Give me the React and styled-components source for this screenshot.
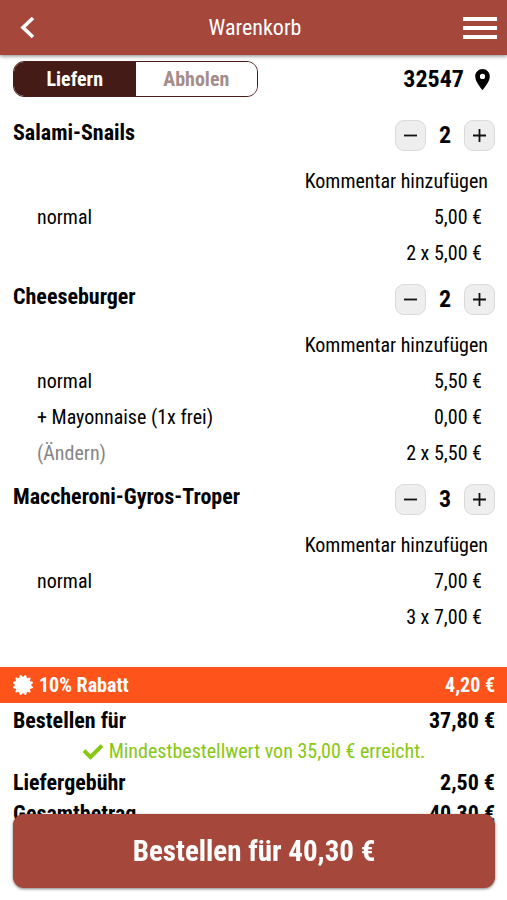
import { useState } from "react";
import styled, { createGlobalStyle } from "styled-components";
import { FaCertificate, FaCheck } from "react-icons/fa";
import { MdLocationOn } from "react-icons/md";

const GlobalStyle = createGlobalStyle`
  *,
  *::before,
  *::after {
    box-sizing: border-box;
  }
  body {
    margin: 0;
    background: #fff;
    color: #000;
    font-family: "Roboto Condensed", "Liberation Sans Narrow", Roboto, sans-serif;
    font-size: 20px;
    line-height: 36px;
  }
  button {
    padding: 0;
    border: 0;
    background: none;
    color: inherit;
    font: inherit;
    cursor: pointer;
  }
  h1,
  h2,
  dl,
  dd {
    margin: 0;
  }
`;

const Page = styled.div`
  min-height: 100vh;
  padding-bottom: 86px;
`;

const Header = styled.header`
  display: grid;
  grid-template-columns: 1fr auto 1fr;
  align-items: center;
  height: 55px;
  padding: 0 10px 0 13px;
  background: #a5483b;
  color: #fff;
  box-shadow: 0 1px 4px rgba(0, 0, 0, 0.5);
  & button {
    display: flex;
  }
  & button:last-child {
    justify-self: end;
  }
`;

const Title = styled.h1`
  font-size: 22px;
  font-weight: 400;
`;

const TopBar = styled.div`
  display: flex;
  align-items: center;
  justify-content: space-between;
  padding: 6px 12px 0 13px;
`;

const Toggle = styled.div`
  display: flex;
  flex: 0 1 245px;
  height: 36px;
  border: 1px solid #4a1c17;
  border-radius: 11px;
  overflow: hidden;
`;

const ToggleButton = styled.button`
  && {
    flex: 1;
    background: ${({ $active }) => ($active ? "#441b17" : "#fff")};
    color: ${({ $active }) => ($active ? "#fff" : "#a38c89")};
    font-weight: 700;
    line-height: 34px;
  }
`;

const Location = styled.button`
  && {
    display: flex;
    align-items: center;
    gap: 6px;
    font-size: 24px;
    font-weight: 700;
  }
`;

const Items = styled.main`
  padding: 10px 12px 32px 13px;
`;

const ItemHead = styled.div`
  display: flex;
  align-items: center;
  justify-content: space-between;
  height: 56px;
`;

const ItemName = styled.h2`
  padding-bottom: 4px;
  font-size: 22px;
  font-weight: 700;
`;

const Stepper = styled.div`
  display: flex;
  align-items: center;
`;

const StepButton = styled.button`
  && {
    display: flex;
    align-items: center;
    justify-content: center;
    width: 31px;
    height: 31px;
    border: 1px solid #dadada;
    border-radius: 9px;
    background: #eee;
  }
`;

const Amount = styled.output`
  width: 38px;
  font-size: 24px;
  font-weight: 700;
  text-align: center;
`;

const CommentButton = styled.button`
  && {
    display: block;
    margin-left: auto;
    padding-right: 7px;
  }
`;

const Line = styled.div`
  display: flex;
  justify-content: space-between;
  padding: 0 13px 0 24px;
  & > :last-child {
    margin-left: auto;
  }
`;

const EditButton = styled.button`
  && {
    color: #858585;
  }
`;

const Discount = styled.div`
  display: flex;
  align-items: center;
  justify-content: space-between;
  padding: 0 12px 0 13px;
  background: #ff531c;
  color: #fff;
  font-weight: 700;
  & span {
    display: flex;
    align-items: center;
    gap: 6px;
  }
`;

const Totals = styled.dl`
  padding: 2px 12px 0 13px;
  line-height: 31px;
`;

const TotalRow = styled.div`
  display: flex;
  justify-content: space-between;
  font-size: 22px;
  font-weight: 700;
`;

const MinimumNote = styled.div`
  display: flex;
  align-items: center;
  justify-content: center;
  gap: 6px;
  color: #87c812;
`;

const Footer = styled.footer`
  position: fixed;
  right: 0;
  bottom: 12px;
  left: 0;
  padding: 0 12px 0 13px;
`;

const OrderButton = styled.button`
  && {
    width: 100%;
    height: 74px;
    border-radius: 11px;
    background: #a5483b;
    box-shadow: 0 1px 3px rgba(0, 0, 0, 0.5);
    color: #fff;
    font-size: 29px;
    font-weight: 700;
  }
`;

const BackIcon = () => (
  <svg width="30" height="30" viewBox="0 0 30 30" fill="none" aria-hidden="true">
    <path d="M20 5 L10 14.5 L20 24" stroke="currentColor" strokeWidth="3.6" />
  </svg>
);

const MenuIcon = () => (
  <svg width="34" height="24" viewBox="0 0 34 24" aria-hidden="true">
    <path d="M0 1h34v4H0zM0 10h34v4H0zM0 19h34v4H0z" fill="currentColor" />
  </svg>
);

const StepIcon = ({ plus }) => (
  <svg width="15" height="15" viewBox="0 0 15 15" aria-hidden="true">
    <path
      d={plus ? "M1 7.5h13M7.5 1v13" : "M1 7.5h13"}
      stroke="#111"
      strokeWidth="1.8"
    />
  </svg>
);

const euro = (value) => `${value.toFixed(2).replace(".", ",")} €`;

const initialItems = [
  { name: "Salami-Snails", amount: 2, price: 5, extras: [] },
  {
    name: "Cheeseburger",
    amount: 2,
    price: 5.5,
    extras: [{ label: "+ Mayonnaise (1x frei)", price: 0 }],
  },
  { name: "Maccheroni-Gyros-Troper", amount: 3, price: 7, extras: [] },
];

const deliveryFee = 2.5;

const CartItem = ({ item, onChange }) => (
  <section>
    <ItemHead>
      <ItemName>{item.name}</ItemName>
      <Stepper>
        <StepButton
          aria-label={`${item.name} weniger`}
          onClick={() => onChange(Math.max(0, item.amount - 1))}
        >
          <StepIcon />
        </StepButton>
        <Amount>{item.amount}</Amount>
        <StepButton
          aria-label={`${item.name} mehr`}
          onClick={() => onChange(item.amount + 1)}
        >
          <StepIcon plus />
        </StepButton>
      </Stepper>
    </ItemHead>
    <CommentButton>Kommentar hinzufügen</CommentButton>
    <Line>
      <span>normal</span>
      <span>{euro(item.price)}</span>
    </Line>
    {item.extras.map((extra) => (
      <Line key={extra.label}>
        <span>{extra.label}</span>
        <span>{euro(extra.price)}</span>
      </Line>
    ))}
    <Line>
      {item.extras.length > 0 && <EditButton>(Ändern)</EditButton>}
      <span>{`${item.amount} x ${euro(item.price)}`}</span>
    </Line>
  </section>
);

const App = () => {
  const [items, setItems] = useState(initialItems);
  const [delivery, setDelivery] = useState(true);

  const sum = items.reduce((acc, item) => acc + item.amount * item.price, 0);
  const discount = sum * 0.1;
  const subtotal = sum - discount;
  const total = subtotal + deliveryFee;

  const changeAmount = (index, amount) =>
    setItems(items.map((item, i) => (i === index ? { ...item, amount } : item)));

  return (
    <Page>
      <GlobalStyle />
      <Header>
        <button aria-label="Zurück">
          <BackIcon />
        </button>
        <Title>Warenkorb</Title>
        <button aria-label="Menü">
          <MenuIcon />
        </button>
      </Header>
      <TopBar>
        <Toggle>
          <ToggleButton
            $active={delivery}
            aria-pressed={delivery}
            onClick={() => setDelivery(true)}
          >
            Liefern
          </ToggleButton>
          <ToggleButton
            $active={!delivery}
            aria-pressed={!delivery}
            onClick={() => setDelivery(false)}
          >
            Abholen
          </ToggleButton>
        </Toggle>
        <Location>
          32547
          <MdLocationOn size={25} />
        </Location>
      </TopBar>
      <Items>
        {items.map((item, index) => (
          <CartItem
            key={item.name}
            item={item}
            onChange={(amount) => changeAmount(index, amount)}
          />
        ))}
      </Items>
      <Discount>
        <span>
          <FaCertificate />
          10% Rabatt
        </span>
        <span>{euro(discount)}</span>
      </Discount>
      <Totals>
        <TotalRow>
          <dt>Bestellen für</dt>
          <dd>{euro(subtotal)}</dd>
        </TotalRow>
        <MinimumNote>
          <FaCheck />
          Mindestbestellwert von 35,00 € erreicht.
        </MinimumNote>
        <TotalRow>
          <dt>Liefergebühr</dt>
          <dd>{euro(deliveryFee)}</dd>
        </TotalRow>
        <TotalRow>
          <dt>Gesamtbetrag</dt>
          <dd>{euro(total)}</dd>
        </TotalRow>
      </Totals>
      <Footer>
        <OrderButton>Bestellen für {euro(total)}</OrderButton>
      </Footer>
    </Page>
  );
};

export default App;
